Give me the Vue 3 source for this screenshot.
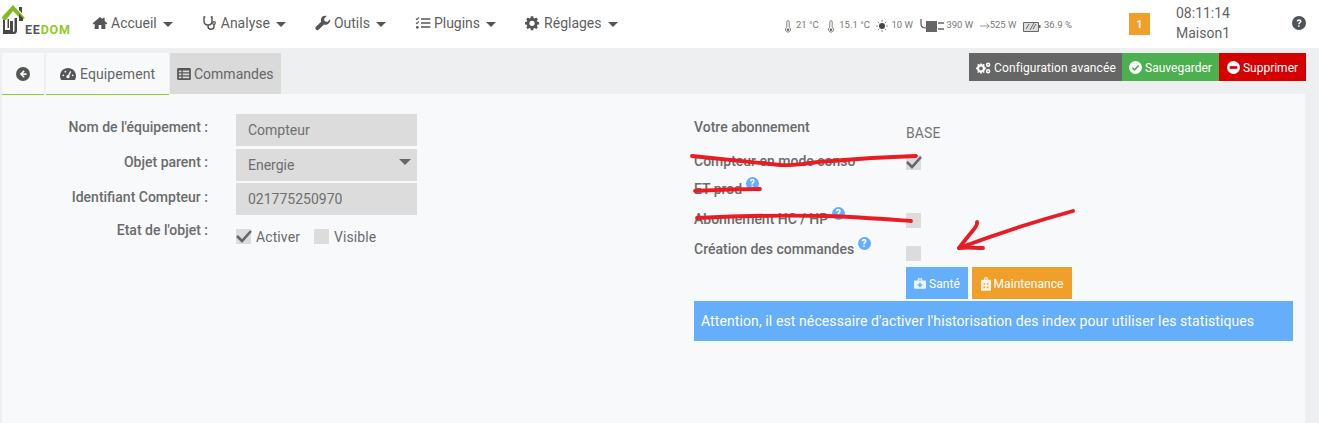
<template>
  <div class="page">
    <header class="topbar">
      <a class="logo">
        <svg class="logo-mark" viewBox="0 0 30 36" width="30" height="36">
          <path d="M2 17 13 5l12 13-3 2-9-9-7 9H3z" fill="#84bb24" />
          <path d="M19 7h3v6l-3-3zM19 14l4 4v3h-4zM3 20h2v10h5V21h3v13H3zM7.500 19h1.500v9H7.500zM14.500 18h2.500v12c0 2.500-1 4-3 4h-1v-2c1 0 1.500-.5 1.500-2z" fill="#484848" />
        </svg>
        <span class="logo-text"><b class="grey">EE</b><b class="green">DOM</b></span>
      </a>

      <nav class="menu">
        <a v-for="item in menu" :key="item.label" class="menu-item">
          <svg viewBox="0 0 24 24" width="16" height="16" class="menu-icon" v-html="item.icon"></svg>
          <span>{{ item.label }}</span>
          <i class="caret"></i>
        </a>
      </nav>

      <div class="widgets">
        <span class="widget therm"><svg viewBox="0 0 10 16" width="8" height="13"><path d="M3.500 9V2.200a1.500 1.500 0 0 1 3 0V9a3.200 3.200 0 1 1-3 0z" fill="none" stroke="#666" stroke-width="1" /><circle cx="5" cy="12" r="1.600" fill="#666" /></svg><em>21 °C</em></span>
        <span class="widget therm"><svg viewBox="0 0 10 16" width="8" height="13"><path d="M3.500 9V2.200a1.500 1.500 0 0 1 3 0V9a3.200 3.200 0 1 1-3 0z" fill="none" stroke="#666" stroke-width="1" /><circle cx="5" cy="12" r="1.600" fill="#666" /></svg><em>15.1 °C</em></span>
        <span class="widget sun"><svg viewBox="0 0 12 12" width="12" height="12"><circle cx="6" cy="6" r="3" fill="#444" /><path d="M6 0v2M6 10v2M0 6h2M10 6h2M1.800 1.800l1.400 1.400M8.800 8.800l1.400 1.400M1.800 10.200l1.400-1.400M8.800 3.200l1.400-1.400" stroke="#888" stroke-width="1" /></svg><em>10 W</em></span>
        <span class="widget plug"><svg viewBox="0 0 25 14" width="25" height="14"><path d="M1 0v5c0 3 2 4 5 4" fill="none" stroke="#555" stroke-width="1.200" /><path d="M6 2h11v11H6z" fill="#666" /><path d="M18 4h6M18 10h6" stroke="#666" stroke-width="1.600" /></svg><em>390 W</em></span>
        <span class="widget arrow"><svg viewBox="0 0 12 8" width="10" height="8"><path d="M0 4h11M8 1l3 3-3 3" fill="none" stroke="#777" stroke-width=".9" /></svg><em>525 W</em></span>
        <span class="widget"><svg viewBox="0 0 18 11" width="18" height="11"><path d="M.5 1.500h15v9H.5z" fill="#ddd" stroke="#666" /><path d="M16 4h1.500v3H16z" fill="#666" /><path d="M7 9l4-7M3 8l3-5M10 8l3-5" stroke="#666" /></svg><em>36.9 %</em></span>
      </div>

      <span class="badge">1</span>

      <div class="clock">
        <span>08:11:14</span>
        <span>Maison1</span>
      </div>

      <svg class="help" viewBox="0 0 24 24" width="14" height="14"><circle cx="12" cy="12" r="12" fill="#4d5358" /><path d="M8 9.500C8 7 9.800 5.500 12.200 5.500c2.300 0 4.100 1.500 4.100 3.600 0 3.100-3.300 3-3.300 5.200h-2.600c0-3.300 3.200-3.500 3.200-5 0-.8-.6-1.300-1.500-1.300-1 0-1.500.6-1.600 1.500zM10.400 15.700H13v2.800h-2.600z" fill="#fff" /></svg>
    </header>

    <div class="tabbar">
      <div class="tabs">
        <a class="tab back">
          <svg viewBox="0 0 24 24" width="14" height="14"><circle cx="12" cy="12" r="12" fill="#555" /><path d="M13 5.500 6.500 12l6.500 6.500 2-2-3-3h6v-3h-6l3-3z" fill="#f8f9fb" /></svg>
        </a>
        <a class="tab active">
          <svg viewBox="0 0 24 20" width="16" height="14"><path d="M12 1C5.400 1 0 6.400 0 13c0 2.200.6 4.300 1.700 6h20.600c1.100-1.700 1.700-3.800 1.700-6 0-6.600-5.400-12-12-12z" fill="#555" /><circle cx="12" cy="14" r="2.500" fill="#f8f9fb" /><path d="M12 14l4-8" stroke="#f8f9fb" stroke-width="2" /><circle cx="5" cy="12" r="1.300" fill="#f8f9fb" /><circle cx="8" cy="6.500" r="1.300" fill="#f8f9fb" /><circle cx="19" cy="12" r="1.300" fill="#f8f9fb" /></svg>
          Equipement
        </a>
        <a class="tab grey-tab">
          <svg viewBox="0 0 16 14" width="14" height="12"><path d="M1.500 0h13A1.500 1.500 0 0 1 16 1.500v11a1.500 1.500 0 0 1-1.500 1.500h-13A1.500 1.500 0 0 1 0 12.500v-11A1.500 1.500 0 0 1 1.500 0zM2 3v2h3V3zm0 3.500v2h3v-2zM2 10v2h3v-2zm4.500-7v2H14V3zm0 3.500v2H14v-2zm0 3.500v2H14v-2z" fill="#555" fill-rule="evenodd" /></svg>
          Commandes
        </a>
      </div>

      <div class="actions">
        <a class="action dark">
          <svg viewBox="0 0 18 14" width="15" height="12">
            <circle cx="6" cy="7.500" r="3.600" fill="none" stroke="#fff" stroke-width="2.800" />
            <path d="M5 1.500h2v2H5zM5 11.500h2v2H5zM0 6.500h2v2H0zM10 6.500h2v2h-2zM1.500 3l1.500-1 1 1.500-1.500 1zM8 3.500l1-1.500 1.500 1-1 1.500zM1.500 12l1.500 1 1-1.500-1.500-1zM8 11.500l1 1.500 1.500-1-1-1.500z" fill="#fff" />
            <circle cx="14.500" cy="3" r="1.800" fill="none" stroke="#fff" stroke-width="1.800" />
            <circle cx="14.500" cy="11" r="1.800" fill="none" stroke="#fff" stroke-width="1.800" />
          </svg>
          Configuration avancée
        </a>
        <a class="action green-btn">
          <svg viewBox="0 0 24 24" width="13" height="13"><circle cx="12" cy="12" r="12" fill="#fff" /><path d="M6 12.500l4 4 8-8" fill="none" stroke="#4caf50" stroke-width="3" /></svg>
          Sauvegarder
        </a>
        <a class="action red-btn">
          <svg viewBox="0 0 24 24" width="13" height="13"><circle cx="12" cy="12" r="12" fill="#fff" /><path d="M5 9.500h14v5H5z" fill="#d50000" /></svg>
          Supprimer
        </a>
      </div>
    </div>

    <main class="panel">
      <section class="form-left">
        <div class="row">
          <label>Nom de l'équipement :</label>
          <div class="input">Compteur</div>
        </div>
        <div class="row second">
          <label>Objet parent :</label>
          <div class="input select">Energie<i class="select-caret"></i></div>
        </div>
        <div class="row third">
          <label>Identifiant Compteur :</label>
          <div class="input">021775250970</div>
        </div>
        <div class="row state">
          <label>Etat de l'objet :</label>
          <div class="checks">
            <span class="box checked"><svg viewBox="0 0 16 14" width="16" height="14"><path d="M1 7l5 5 9-10" fill="none" stroke="#666" stroke-width="2.600" /></svg></span>
            <span class="check-text">Activer</span>
            <span class="box"></span>
            <span class="check-text">Visible</span>
          </div>
        </div>
      </section>

      <section class="form-right">
        <div class="opt o1"><label>Votre abonnement</label><span class="value">BASE</span></div>
        <div class="opt o2">
          <label>Compteur en mode conso</label>
          <span class="box checked"><svg viewBox="0 0 16 14" width="16" height="14"><path d="M1 7l5 5 9-10" fill="none" stroke="#666" stroke-width="2.600" /></svg></span>
        </div>
        <div class="opt o3"><label>ET prod <sup class="tip">?</sup></label><span></span></div>
        <div class="opt o4"><label>Abonnement HC / HP <sup class="tip">?</sup></label><span class="box"></span></div>
        <div class="opt o5"><label>Création des commandes <sup class="tip">?</sup></label><span class="box"></span></div>
        <div class="opt o6">
          <span></span>
          <div class="btns">
            <a class="btn blue">
              <svg viewBox="0 0 16 14" width="12" height="11"><path d="M5 3V1.500C5 .7 5.700 0 6.500 0h3c.8 0 1.500.7 1.500 1.500V3h3.500c.8 0 1.500.7 1.500 1.500v8c0 .8-.7 1.500-1.500 1.500h-13C.7 14 0 13.300 0 12.500v-8C0 3.700.7 3 1.500 3zm1.500 0h3V1.500h-3z" fill="#fff" fill-opacity=".85" fill-rule="evenodd" /><path d="M7 6h2v2h2v2H9v2H7v-2H5V8h2z" fill="#64aefc" /></svg>
              Santé
            </a>
            <a class="btn orange">
              <svg viewBox="0 0 12 16" width="10" height="14"><path d="M4 3V1c0-.6.4-1 1-1h2c.6 0 1 .4 1 1v2h2.500c.8 0 1.500.7 1.500 1.500V16H0V4.500C0 3.700.7 3 1.500 3zm1.200 0h1.600V1.200H5.200z" fill="#fff" fill-opacity=".9" fill-rule="evenodd" /><path d="M3 7h2v2H3zM7 7h2v2H7zM3 11h2v2H3zM7 11h2v2H7z" fill="#f0a02a" /></svg>
              Maintenance
            </a>
          </div>
        </div>
        <div class="alert">Attention, il est nécessaire d'activer l'historisation des index pour utiliser les statistiques</div>
      </section>

      <!-- red marks drawn over the screenshot -->
      <svg class="scribbles" viewBox="0 0 1319 423" width="1319" height="423">
        <path d="M692 156c30 3 60 6 88 9 12 1 22-1 38-3 32-3 64-5 98-6" />
        <path d="M695 191c20-1 44-2 65-2" />
        <path d="M697 218c40-2 90-3 130-2 30 1 56 3 84 5" />
        <path d="M1073 211c-40 11-82 25-114 37" />
        <path d="M977 222c1 4-4 8-7 12-4 5-8 10-11 14 8-1 16 0 24 0" />
      </svg>
    </main>
  </div>
</template>

<script setup>
const menu = [
  {
    label: 'Accueil',
    icon: '<path d="M12 3 1 12.500l1.500 1.700L4 13v8h6v-6h4v6h6v-8l1.500 1.200 1.500-1.700L19 9V4h-3v2.500z" fill="#555"/>'
  },
  {
    label: 'Analyse',
    icon: '<path d="M5 3H3v6c0 3.500 2.500 6 6 6s6-2.500 6-6V3h-2M9 15v2c0 2.500 2 4.500 4.500 4.500S18 19.500 18 17v-3" fill="none" stroke="#555" stroke-width="2.200"/><circle cx="18" cy="12" r="2" fill="none" stroke="#555" stroke-width="1.800"/>'
  },
  {
    label: 'Outils',
    icon: '<path d="M22.500 6.500 18.500 10.500 14.500 9.500 13.500 5.500 17.500 1.500C14.500.5 11 1.500 9.500 4.500 8.500 6.500 8.700 8.300 9.200 10L1.500 17.700c-1.200 1.200-1.200 3 0 4.200 1.200 1.200 3 1.200 4.200 0L13.400 14.200c1.700.6 3.700.6 5.500-.4 3-1.600 4.500-4.300 3.600-7.300z" fill="#555"/>'
  },
  {
    label: 'Plugins',
    icon: '<path d="M9 6h14M9 12h14M9 18h14" stroke="#555" stroke-width="2.400"/><path d="M1.500 5.500 3 7l3-3.500M1.500 11.500 3 13l3-3.500" fill="none" stroke="#555" stroke-width="1.600"/><circle cx="3.500" cy="18.500" r="2" fill="#555"/>'
  },
  {
    label: 'Réglages',
    icon: '<path fill-rule="evenodd" d="M10 1h4l.6 3.100 1.900.8L19.200 3.100 22 5.900 20.200 8.500l.8 1.900L24 11v4l-3 .6-.8 1.900L22 20.100 19.200 22.900 16.500 21.100 14.600 21.900 14 25h-4l-.6-3.100-1.900-.8L4.800 22.900 2 20.100 3.800 17.500 3 15.600 0 15v-4l3-.6.8-1.900L2 5.900 4.800 3.100 7.500 4.900 9.400 4.100zM12 8.500a4.500 4.500 0 1 0 0 9 4.500 4.500 0 0 0 0-9z" fill="#555" transform="translate(0 1) scale(.88)"/>'
  }
]
</script>

<style>
html,
body {
  margin: 0;
  background: #eeeff1;
  overflow: hidden;
}
</style>

<style scoped>
.page {
  width: 1319px;
  height: 423px;
  font-family: Roboto, "Liberation Sans", sans-serif;
  color: #6b6b6b;
  background: #eeeff1;
  overflow: hidden;
  position: relative;
}

.topbar {
  height: 48px;
  background: #fff;
  display: flex;
  align-items: center;
}

.logo {
  width: 92px;
  height: 48px;
  position: relative;
  flex: none;
}

.logo-mark {
  position: absolute;
  left: 0;
  top: 0;
}

.logo-text {
  position: absolute;
  left: 25px;
  top: 23px;
  font-size: 12.500px;
  letter-spacing: 0.8px;
  line-height: 14px;
}

.grey {
  color: #555;
}

.green {
  color: #93c928;
}

.menu {
  display: flex;
  gap: 29px;
  width: 692px;
  flex: none;
  padding-bottom: 2px;
}

.menu-item {
  display: flex;
  align-items: center;
  font-size: 14px;
  color: #5f5f5f;
}

.menu-icon {
  margin-right: 3px;
}

.caret {
  width: 0;
  height: 0;
  margin-left: 6px;
  margin-top: 2px;
  border-left: 5px solid transparent;
  border-right: 5px solid transparent;
  border-top: 5px solid #555;
}

.widgets {
  display: flex;
  align-items: center;
  gap: 6.500px;
  width: 345px;
  flex: none;
  font-size: 9.500px;
  color: #777;
}

.widget {
  display: flex;
  align-items: center;
  gap: 3px;
}

.widget svg {
  margin-top: 4px;
}

.therm {
  gap: 4px;
  margin-right: 2px;
}

.therm + .therm {
  margin-right: 0;
}

.sun {
  gap: 3px;
}

.plug {
  gap: 1px;
  margin-left: 1px;
}

.arrow {
  gap: 0;
}

.widget em {
  font-style: normal;
}

.badge {
  width: 21px;
  height: 22px;
  background: #f0a02a;
  color: #fff;
  font-size: 11px;
  font-weight: 700;
  display: flex;
  align-items: center;
  justify-content: center;
  flex: none;
}

.clock {
  width: 106px;
  display: flex;
  flex-direction: column;
  align-items: center;
  font-size: 14px;
  line-height: 20px;
  color: #5f6468;
  flex: none;
  padding-bottom: 2px;
}

.help {
  margin-left: 36px;
  margin-bottom: 2px;
  flex: none;
}

.tabbar {
  height: 46px;
  padding: 5px 13px 0 2px;
  box-sizing: border-box;
  display: flex;
  justify-content: space-between;
}

.tabs {
  display: flex;
  height: 42px;
  position: relative;
  z-index: 1;
  align-items: flex-start;
}

.tab {
  display: flex;
  align-items: center;
  gap: 3px;
  font-size: 14px;
  color: #666;
  box-sizing: border-box;
  height: 41px;
}

.back {
  width: 42px;
  height: 42px;
  justify-content: center;
  background: #f8f9fb;
  border-bottom: 1px solid #93c928;
  margin-right: 2px;
}

.active {
  width: 123px;
  height: 42px;
  padding-left: 14px;
  gap: 4px;
  letter-spacing: 0.1px;
  background: #f8f9fb;
  border-bottom: 1px solid #93c928;
  margin-right: 1px;
}

.grey-tab {
  width: 111px;
  padding-left: 7px;
  background: #dadada;
}

.actions {
  display: flex;
  height: 28px;
}

.action {
  display: flex;
  align-items: center;
  justify-content: center;
  gap: 3px;
  font-size: 12px;
  color: #fff;
  padding-top: 1px;
  box-sizing: border-box;
}

.dark {
  width: 153px;
  background: #666;
  letter-spacing: 0.1px;
  padding-left: 1px;
}

.green-btn {
  width: 97px;
  background: #4caf50;
}

.red-btn {
  width: 87px;
  background: #d50000;
}

.panel {
  width: 1303px;
  height: 329px;
  margin-left: 2px;
  background: #f8f9fb;
  display: flex;
  box-sizing: border-box;
  padding-top: 20px;
  position: relative;
  font-size: 14px;
}

.form-left {
  width: 692px;
  flex: none;
}

.row {
  display: grid;
  grid-template-columns: 206px 181px;
  column-gap: 28px;
  margin-bottom: 3px;
}

.second {
  margin-bottom: 2px;
}

.third label {
  padding-top: 1px;
}

.row label {
  text-align: right;
  font-weight: 500;
  line-height: 26px;
}

.input {
  height: 32px;
  background: #dcdcdc;
  padding-left: 12px;
  line-height: 32px;
  color: #6f6f6f;
  position: relative;
}

.select {
  line-height: 33px;
}

.select-caret {
  position: absolute;
  right: 6px;
  top: 10px;
  border-left: 6px solid transparent;
  border-right: 6px solid transparent;
  border-top: 6px solid #666;
}

.state {
  margin-top: 14px;
}

.state label {
  line-height: 14px;
  margin-top: -6px;
}

.checks {
  display: flex;
  align-items: center;
  height: 15px;
}

.check-text {
  margin-left: 5px;
  margin-right: 14px;
  letter-spacing: 0.1px;
}

.box {
  display: block;
  width: 15px;
  height: 15px;
  background: #dcdcdc;
  flex: none;
}

.box svg {
  display: block;
}

.form-right {
  width: 599px;
  flex: none;
}

.opt {
  display: grid;
  grid-template-columns: 212px auto;
  align-items: start;
}

.opt label {
  font-weight: 500;
  white-space: nowrap;
  line-height: 16px;
}

.o1 {
  height: 41px;
  padding-top: 5px;
  box-sizing: border-box;
}

.value {
  font-size: 14px;
  line-height: 22px;
  margin-top: 3px;
  color: #757575;
  letter-spacing: 0.1px;
}

.o2 {
  height: 28px;
}

.o2 label,
.o3 label,
.o4 label {
  margin-top: -2px;
}

.o3 {
  height: 30px;
}

.o4 {
  height: 33px;
}

.o5 {
  height: 21px;
}

.o5 label {
  margin-top: -5px;
}

.tip {
  display: inline-block;
  width: 13px;
  height: 13px;
  border-radius: 50%;
  background: #64aefc;
  color: #fff;
  font-size: 10px;
  font-weight: 700;
  line-height: 13px;
  text-align: center;
  vertical-align: 7px;
  margin-top: -12px;
}

.btns {
  display: flex;
  gap: 4px;
}

.btn {
  height: 32px;
  display: flex;
  align-items: center;
  justify-content: center;
  gap: 3px;
  font-size: 12px;
  color: #fff;
  padding-top: 1px;
  box-sizing: border-box;
  letter-spacing: 0.05px;
}

.blue {
  width: 62px;
  background: #64aefc;
}

.orange {
  width: 100px;
  background: #f0a02a;
}

.alert {
  height: 40px;
  margin-top: 2px;
  background: #64aefc;
  color: #fff;
  padding-left: 7px;
  line-height: 40px;
  font-size: 14px;
  letter-spacing: 0.1px;
}

.scribbles {
  position: absolute;
  left: -2px;
  top: -94px;
  pointer-events: none;
  z-index: 2;
}

.scribbles path {
  fill: none;
  stroke: #e81c22;
  stroke-width: 3.800;
  stroke-linecap: round;
  stroke-linejoin: round;
}
</style>
